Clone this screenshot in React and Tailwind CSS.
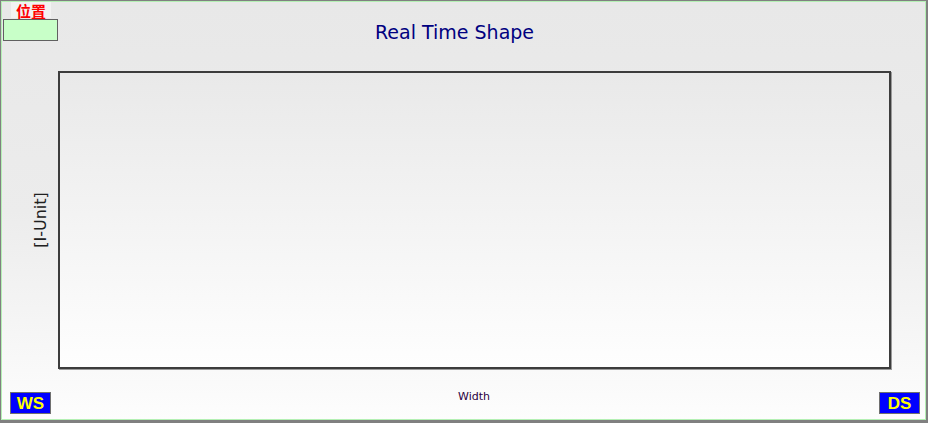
import React from 'react';

const sans = { fontFamily: '"DejaVu Sans", Verdana, sans-serif' };

function ValueBadge({ text, className = '' }) {
  return (
    <div
      className={`flex h-[22px] w-[41px] items-center justify-center border border-[#707070] bg-[#0000ff] text-[17px] font-bold leading-none text-[#ffff00] ${className}`}
      style={{ fontFamily: '"Liberation Sans", Arial, sans-serif' }}
    >
      {text}
    </div>
  );
}

export default function App() {
  return (
    <div className="h-[423px] w-[928px] border-b-[3px] border-l border-r-2 border-t border-[#808080]">
      <div className="flex h-full w-full flex-col border border-[#b4f0b4] bg-linear-to-b from-[#e8e8e8] via-[#ececec] to-[#fdfdfd]">
        {/* header */}
        <div className="flex h-[69px] items-start">
          <div className="flex w-[56px] flex-col">
            <div
              className="ml-[9px] flex h-[16px] w-[40px] items-center justify-center bg-[#f2f2f2] text-[15px] font-bold leading-none text-[#ff0000]"
              style={{ fontFamily: '"Noto Sans CJK SC", sans-serif' }}
            >
              位置
            </div>
            <div className="ml-px mt-px h-[22px] w-[55px] border border-[#606060] bg-[#c8ffc8]" />
          </div>
          <div
            className="ml-[317px] mt-[21px] text-[19px] leading-none text-[#000080]"
            style={sans}
          >
            Real Time Shape
          </div>
        </div>

        {/* plot */}
        <div className="flex h-[298px]">
          <div className="flex w-[56px] items-center justify-center pl-[22px]">
            <div
              className="-rotate-90 whitespace-nowrap text-[16px] leading-none text-[#202020]"
              style={sans}
            >
              [I-Unit]
            </div>
          </div>
          <div className="h-[298px] w-[833px] border-2 border-[#3c3c3c] bg-linear-to-b from-[#e9e9e9] to-[#fefefe] shadow-[1px_1px_0_#9a9a9a]" />
        </div>

        {/* footer */}
        <div className="relative flex flex-1 items-start">
          <ValueBadge text="WS" className="ml-[8px] mt-[23px]" />
          <div
            className="ml-[407px] mt-[22px] text-[11px] leading-none text-[#2a0040]"
            style={sans}
          >
            Width
          </div>
          <ValueBadge text="DS" className="ml-auto mr-[5px] mt-[23px]" />
        </div>
      </div>
    </div>
  );
}
